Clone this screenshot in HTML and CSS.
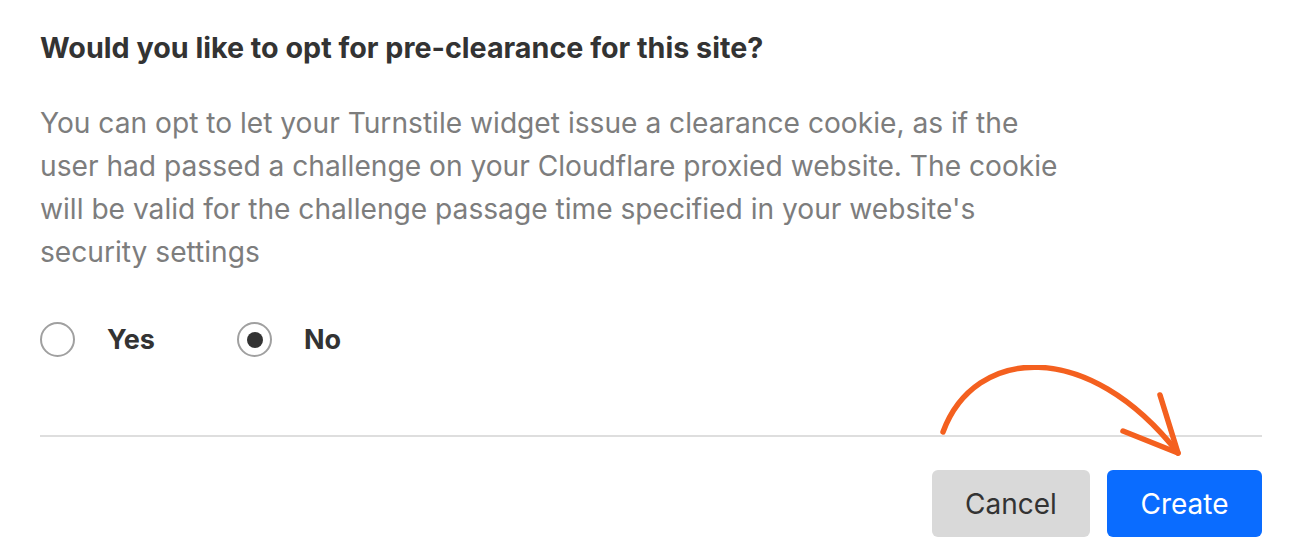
FILE: index.html
```html
<!DOCTYPE html>
<html>
<head>
<meta charset="utf-8">
<link rel="stylesheet" href="styles.css">
</head>
<body>
<div class="dialog">
  <h2 class="title">Would you like to opt for pre-clearance for this site?</h2>
  <p class="desc">You can opt to let your Turnstile widget issue a clearance cookie, as if the<br>user had passed a challenge on your Cloudflare proxied website. The cookie<br>will be valid for the challenge passage time specified in your website's<br>security settings</p>
  <div class="radios">
    <label class="radio"><span class="circle"></span><span class="label">Yes</span></label>
    <label class="radio"><span class="circle checked"></span><span class="label">No</span></label>
  </div>
  <div class="footer">
    <button class="btn cancel">Cancel</button>
    <button class="btn create">Create</button>
    <svg class="arrow" width="260" height="110" viewBox="0 0 260 110">
      <path d="M3 67 C 34.5 -18.5, 148 -27, 238 88" fill="none" stroke="#f4601f" stroke-width="5.5" stroke-linecap="round"/>
      <path d="M220 30 L 238 88 L 183 66" fill="none" stroke="#f4601f" stroke-width="5.5" stroke-linecap="round" stroke-linejoin="round"/>
    </svg>
  </div>
</div>
</body>
</html>
```
FILE: styles.css
```css
html, body {
  margin: 0;
  padding: 0;
  background: #ffffff;
}
body {
  font-family: Inter, "Liberation Sans", sans-serif;
  width: 1300px;
  height: 560px;
  overflow: hidden;
}
.dialog {
  padding: 33px 38px 0 40px;
}
.title {
  margin: 0;
  font-size: 28.7px;
  font-weight: 700;
  color: #333333;
  line-height: 30px;
}
.desc {
  margin: 39px 0 0 0;
  font-size: 28.15px;
  line-height: 43px;
  color: #7d7d7d;
}
.radios {
  display: flex;
  gap: 82px;
  margin-top: 48px;
  align-items: center;
}
.radio {
  display: flex;
  align-items: center;
  gap: 32px;
}
.circle {
  width: 31px;
  height: 31px;
  border: 2px solid #a0a0a0;
  border-radius: 50%;
  box-sizing: content-box;
  display: flex;
  align-items: center;
  justify-content: center;
}
.circle.checked::after {
  content: "";
  width: 16px;
  height: 16px;
  border-radius: 50%;
  background: #333333;
}
.label {
  font-size: 27px;
  font-weight: 700;
  color: #333333;
}
.footer {
  position: relative;
  margin-top: 78px;
  border-top: 2px solid #dedede;
  padding-top: 33px;
  display: flex;
  justify-content: flex-end;
  gap: 17px;
}
.btn {
  font-family: Inter, "Liberation Sans", sans-serif;
  font-size: 28px;
  height: 67px;
  border: none;
  border-radius: 6px;
  cursor: pointer;
}
.cancel {
  width: 158px;
  background: #d9d9d9;
  color: #333333;
}
.create {
  width: 155px;
  background: #0a6cff;
  color: #ffffff;
}
.arrow {
  position: absolute;
  left: 900px;
  top: -72px;
}
```
